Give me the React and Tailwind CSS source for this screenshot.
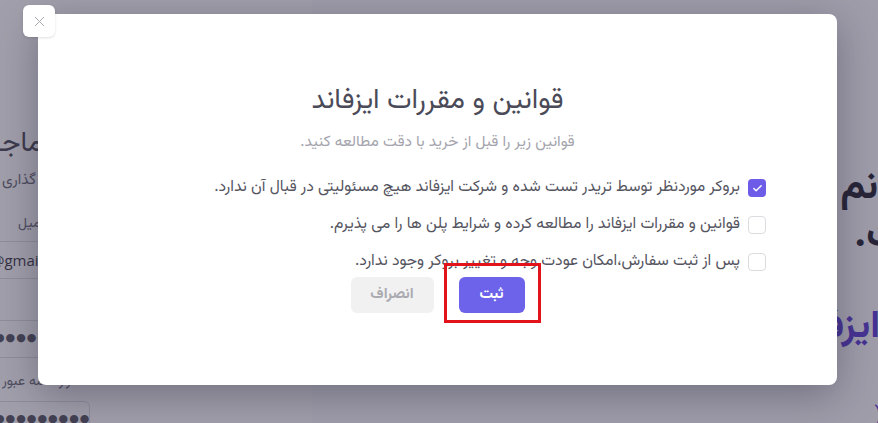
import React, { useState } from 'react';
import { X, Check } from 'lucide-react';

const rules = [
  'بروکر موردنظر توسط تریدر تست شده و شرکت ایزفاند هیچ مسئولیتی در قبال آن ندارد.',
  'قوانین و مقررات ایزفاند را مطالعه کرده و شرایط پلن ها را می پذیرم.',
  'پس از ثبت سفارش،امکان عودت وجه و تغییر بروکر وجود ندارد.',
];

const App = () => {
  const [checked, setChecked] = useState([true, false, false]);

  const toggle = (i) => {
    setChecked(checked.map((c, idx) => (idx === i ? !c : c)));
  };

  return (
    <div className="relative w-[878px] h-[423px] overflow-hidden font-['Vazirmatn','Noto_Sans_Arabic','DejaVu_Sans',sans-serif]">
      {/* Page behind the modal */}
      <div className="flex h-full">
        {/* Register form */}
        <div className="w-[312px] h-full bg-white overflow-hidden">
          <div dir="rtl" className="flex flex-col pt-[124px] w-[400px] -ml-[6px]">
            <h1 className="text-left text-[28px] leading-[40px] text-[#4a4a55] whitespace-nowrap">
              ثبت نام در ماجـ
            </h1>
            <p className="text-left text-[15px] leading-[22px] text-[#6a6a75] mt-[6px] ml-[8px] whitespace-nowrap">
              شروع سرمایه گذاری
            </p>
            <label className="text-left text-[14px] text-[#6a6a75] mt-[22px] ml-[24px]">ایمیل</label>
            <div dir="ltr" className="self-end mt-[6px] w-[98px] h-[38px] border border-[#dedee4] rounded-md flex items-center overflow-hidden">
              <span className="text-[15px] text-[#3a3a45] font-['Open_Sans',sans-serif] -ml-[4px] whitespace-nowrap">@gmail.com</span>
            </div>
            <div dir="ltr" className="self-end mt-[41px] w-[98px] h-[38px] border border-[#dedee4] rounded-md flex items-center overflow-hidden">
              <span className="text-[11px] tracking-[1px] text-[#555560] whitespace-nowrap">●●●●●●●●●●</span>
            </div>
            <label className="text-left text-[14px] text-[#6a6a75] mt-[14px] ml-[8px] whitespace-nowrap">تکرار کلمه عبور</label>
            <div dir="ltr" className="self-end mt-[8px] w-[96px] h-[38px] border border-[#dedee4] rounded-md flex items-center overflow-hidden">
              <span className="text-[11px] tracking-[1px] text-[#555560] whitespace-nowrap">●●●●●●●●●●</span>
            </div>
          </div>
        </div>

        {/* Hero */}
        <div className="flex-1 h-full bg-[#fbfbfd] overflow-hidden">
          <div dir="rtl" className="flex flex-col pt-[164px] -mr-[14px] text-right">
            <h2 className="text-[40px] leading-[48px] font-bold text-[#23212f] whitespace-nowrap">
              <span className="text-[#5b3bd6]">(</span>نم معاملاتی
            </h2>
            <h2 className="text-[40px] leading-[48px] font-bold text-[#23212f] whitespace-nowrap -mr-[10px]">
              ت.
            </h2>
            <h3 className="mt-[44px] text-[38px] leading-[48px] font-bold text-[#5b3bd6] whitespace-nowrap mr-[12px]">
              ایزفاند
            </h3>
            <span className="mt-[48px] text-[22px] text-[#5b3bd6] mr-[10px]">(</span>
          </div>
        </div>
      </div>

      {/* Overlay */}
      <div className="absolute inset-0 bg-[#2f2b45]/45" />

      {/* Modal */}
      <div
        dir="rtl"
        className="absolute left-[38px] top-[14px] w-[799px] h-[371px] bg-white rounded-lg shadow-[0_10px_40px_rgba(30,25,50,0.35)] flex flex-col items-center pt-[69px]"
      >
        <h2 className="text-[28px] leading-[36px] text-[#4a4a58]">قوانین و مقررات ایزفاند</h2>
        <p className="mt-[12px] text-[15.5px] leading-[22px] text-[#a4a4ad]">
          قوانین زیر را قبل از خرید با دقت مطالعه کنید.
        </p>

        <div className="w-[657px] mt-[24px] flex flex-col gap-[15px]">
          {rules.map((rule, i) => (
            <label key={i} className="flex items-center gap-[8px] cursor-pointer h-[22px]">
              <span
                onClick={() => toggle(i)}
                className={
                  checked[i]
                    ? 'w-[18px] h-[18px] rounded-[4px] bg-[#6c5ce7] flex items-center justify-center shrink-0'
                    : 'w-[18px] h-[18px] rounded-[4px] border-[1.5px] border-[#dcdce0] bg-white shrink-0'
                }
              >
                {checked[i] && <Check size={11} strokeWidth={3} className="text-white" />}
              </span>
              <span className="text-[15.8px] text-[#55555f] whitespace-nowrap">{rule}</span>
            </label>
          ))}
        </div>

        <div className="mt-[4px] flex gap-[25px]">
          <button className="w-[66px] h-[36px] rounded-md bg-[#6c63ea] text-white text-[15px] font-bold">
            ثبت
          </button>
          <button className="w-[83px] h-[36px] rounded-md bg-[#f1f1f2] text-[#aaaab0] text-[15px] font-bold">
            انصراف
          </button>
        </div>
      </div>

      {/* Close button */}
      <button className="absolute left-[23px] top-[5px] w-[32px] h-[32px] bg-white rounded-md shadow-sm flex items-center justify-center">
        <X size={17} strokeWidth={1.4} className="text-[#a8a8b0]" />
      </button>

      {/* Highlight annotation */}
      <div className="absolute left-[444px] top-[263px] w-[97px] h-[60px] border-[3px] border-[#e3131b]" />
    </div>
  );
};

export default App;
